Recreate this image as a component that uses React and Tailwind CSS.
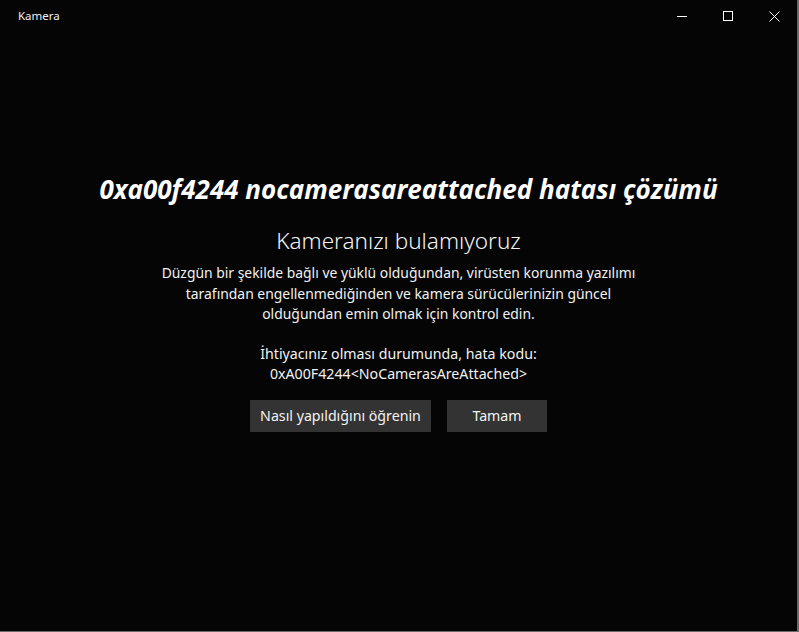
import React from "react";

const ui = { fontFamily: '"Noto Sans", "Open Sans", sans-serif' };
const display = { fontFamily: '"Open Sans", "Noto Sans", sans-serif' };

export default function App() {
  return (
    <div
      className="w-[799px] h-[632px] bg-[#050505] text-white flex flex-col border-r-2 border-b border-[#6b6b6b] overflow-hidden"
      style={ui}
    >
      {/* title bar */}
      <div className="h-8 flex items-center shrink-0">
        <span className="pl-[18px] text-[11.5px] text-[#f0f0f0]">Kamera</span>
        <div className="ml-auto flex h-8">
          <button className="w-[46px] h-8 flex items-center justify-center">
            <svg width="10" height="10" viewBox="0 0 10 10">
              <path d="M0 5.5h10" stroke="#fff" strokeWidth="1" />
            </svg>
          </button>
          <button className="w-[46px] h-8 flex items-center justify-center">
            <svg width="10" height="10" viewBox="0 0 10 10">
              <rect x="0.5" y="0.5" width="9" height="9" fill="none" stroke="#fff" strokeWidth="1" />
            </svg>
          </button>
          <button className="w-[46px] h-8 flex items-center justify-center">
            <svg width="11" height="11" viewBox="0 0 11 11">
              <path d="M0.5 0.5l10 10M10.5 0.5l-10 10" stroke="#fff" strokeWidth="1" />
            </svg>
          </button>
        </div>
      </div>

      {/* content */}
      <div className="flex flex-col items-center pt-[142px]">
        <h1
          className="text-[26px] leading-[31px] font-bold italic pl-[20px]"
          style={display}
        >
          0xa00f4244 nocamerasareattached hatası çözümü
        </h1>

        <h2 className="mt-[21px] text-[22.5px] leading-[29px] font-light text-[#f2f2f2]">
          Kameranızı bulamıyoruz
        </h2>

        <p className="mt-2 text-[13.9px] leading-[20.5px] text-center text-[#f2f2f2]">
          <span className="block">Düzgün bir şekilde bağlı ve yüklü olduğundan, virüsten korunma yazılımı</span>
          <span className="block">tarafından engellenmediğinden ve kamera sürücülerinizin güncel</span>
          <span className="block">olduğundan emin olmak için kontrol edin.</span>
        </p>

        <p className="mt-[19px] text-[14.2px] leading-[20px] text-center text-[#f2f2f2]">
          <span className="block">İhtiyacınız olması durumunda, hata kodu:</span>
          <span className="block">0xA00F4244&lt;NoCamerasAreAttached&gt;</span>
        </p>

        <div className="mt-4 flex gap-4">
          <button className="w-[181px] h-8 bg-[#333333] text-[14.2px] text-[#f2f2f2]">
            Nasıl yapıldığını öğrenin
          </button>
          <button className="w-[100px] h-8 bg-[#333333] text-[14.2px] text-[#f2f2f2]">
            Tamam
          </button>
        </div>
      </div>
    </div>
  );
}
